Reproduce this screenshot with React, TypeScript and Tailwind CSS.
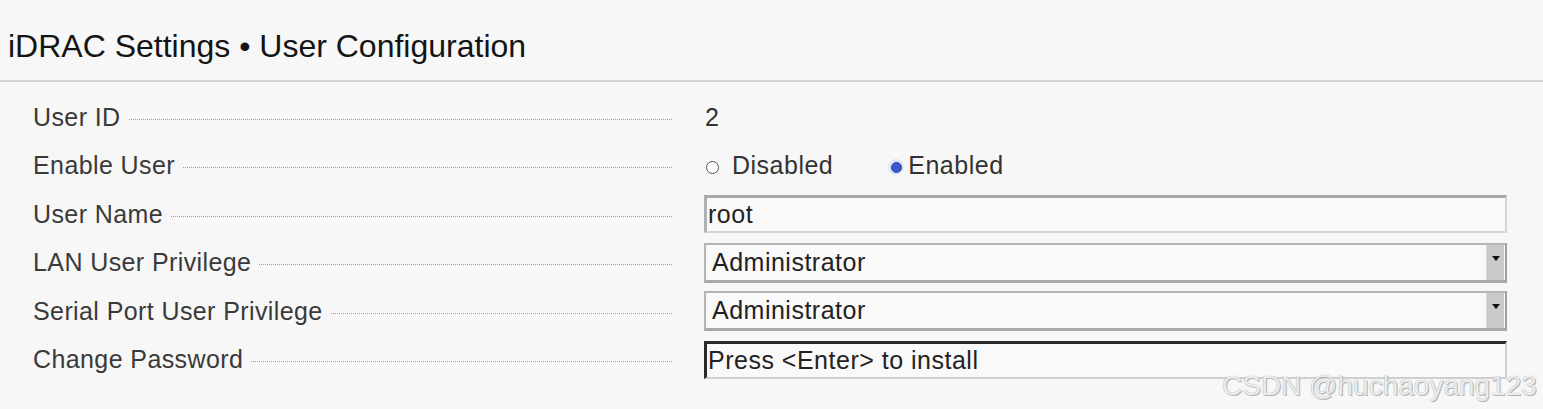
import React from "react";

const font = { fontFamily: '"Liberation Sans", Arial, sans-serif' };

function Leader() {
  return <div className="flex-1 ml-[8px] border-b border-dotted border-[#a0a0a0] translate-y-[2px]" />;
}

function Label({ text }: { text: string }) {
  return (
    <div className="flex items-center w-[639px] text-[25px] text-[#3a3a3a] tracking-[0.4px]">
      <span className="whitespace-nowrap">{text}</span>
      <Leader />
    </div>
  );
}

function Box({ children, focused }: { children: React.ReactNode; focused?: boolean }) {
  return (
    <div
      className={
        "flex items-center h-[38px] w-[803px] bg-[#f9f9f9] text-[25px] tracking-[0.5px] text-[#222] " +
        (focused
          ? "border-t-[3px] border-l-[3px] border-r-[2px] border-b-[2px] border-t-[#2a2a2a] border-l-[#2a2a2a] border-r-[#cfcfcf] border-b-[#cfcfcf]"
          : "border-t-[3px] border-l-[3px] border-r-[2px] border-b-[2px] border-t-[#a8a8a8] border-l-[#b0b0b0] border-r-[#d6d6d6] border-b-[#d6d6d6]")
      }
    >
      {children}
    </div>
  );
}

function Select({ value }: { value: string }) {
  return (
    <div className="flex items-stretch h-[40px] w-[803px] bg-[#f9f9f9] text-[25px] tracking-[0.5px] text-[#222] border-t-[2px] border-l-[2px] border-r-[2px] border-b-[3px] border-t-[#b5b5b5] border-l-[#b5b5b5] border-r-[#a0a0a0] border-b-[#a8a8a8]">
      <div className="flex-1 flex items-center pl-[6px]">{value}</div>
      <div className="w-[18px] bg-[#c9c9c9] border-l border-[#d8d8d8] flex items-start justify-center pt-[11px] mr-[1px]">
        <svg width="8" height="6" viewBox="0 0 8 6">
          <path d="M0 0 L8 0 L4 5 Z" fill="#111" />
        </svg>
      </div>
    </div>
  );
}

function Row({ label, children }: { label: string; children: React.ReactNode }) {
  return (
    <div className="flex items-center h-[48.5px]">
      <Label text={label} />
      <div className="ml-[32px] flex items-center">{children}</div>
    </div>
  );
}

export default function App() {
  return (
    <div className="relative w-[1543px] h-[409px] bg-[#f7f7f7] overflow-hidden" style={font}>
      <div className="h-[82px] flex items-center pl-[8px] pt-[12px] border-b-[2px] border-[#d2d2d2]">
        <h1 className="text-[32px] text-[#141414]">iDRAC Settings • User Configuration</h1>
      </div>
      <div className="pl-[33px] pt-[11px]">
        <Row label="User ID">
          <span className="text-[25px] text-[#333] ml-[1px]">2</span>
        </Row>
        <Row label="Enable User">
          <div className="flex items-center text-[25px] tracking-[0.5px] text-[#333]">
            <span className="w-[13px] h-[13px] rounded-full border border-[#555] bg-white ml-[2px] mt-[3px]" />
            <span className="ml-[13px]">Disabled</span>
            <span className="ml-[55px] w-[16px] h-[16px] rounded-full bg-[#dfe6f7] flex items-center justify-center mt-[3px]">
              <span className="w-[11px] h-[11px] rounded-full bg-[#3b57c9] border border-[#2c46b0]" />
            </span>
            <span className="ml-[4px]">Enabled</span>
          </div>
        </Row>
        <Row label="User Name">
          <Box>
            <span className="pl-[1px]">root</span>
          </Box>
        </Row>
        <Row label="LAN User Privilege">
          <Select value="Administrator" />
        </Row>
        <Row label="Serial Port User Privilege">
          <Select value="Administrator" />
        </Row>
        <Row label="Change Password">
          <Box focused>
            <span className="pl-[1px]">Press &lt;Enter&gt; to install</span>
          </Box>
        </Row>
      </div>
      <div
        className="absolute left-[1222px] top-[365px] text-[28px] text-[#ececec]"
        style={{ textShadow: "0 0 1px #9a9a9a, 1px 1px 0 #b8b8b8" }}
      >
        CSDN @huchaoyang123
      </div>
    </div>
  );
}
